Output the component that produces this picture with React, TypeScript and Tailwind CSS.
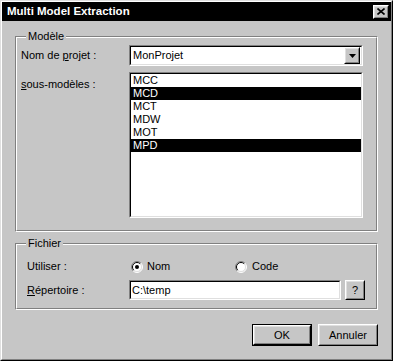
import type { ReactNode } from 'react'

const Raised = ({ className, children }: { className: string; children?: ReactNode }) => (
  <div className={`border border-t-white border-l-white border-r-black border-b-black ${className}`}>
    <div className="flex h-full w-full items-center justify-center border border-t-[#dfdfdf] border-l-[#dfdfdf] border-r-[#808080] border-b-[#808080]">
      {children}
    </div>
  </div>
)

const Sunken = ({ className, children }: { className: string; children?: ReactNode }) => (
  <div className={`border border-t-[#808080] border-l-[#808080] border-r-white border-b-white ${className}`}>
    <div className="h-full w-full border border-t-black border-l-black border-r-[#dfdfdf] border-b-[#dfdfdf] bg-white">
      {children}
    </div>
  </div>
)

const Group = ({ title, className, children }: { title: string; className: string; children: ReactNode }) => (
  <div className={`relative border border-t-[#808080] border-l-[#808080] border-r-white border-b-white ${className}`}>
    <div className="h-full border border-t-white border-l-white border-r-[#808080] border-b-[#808080]">
      {children}
    </div>
    <span className="absolute -top-[7px] left-[10px] bg-[#c6c6c6] px-[2px] leading-[13px]">{title}</span>
  </div>
)

const Radio = ({ checked }: { checked?: boolean }) => (
  <svg width="12" height="12" viewBox="0 0 12 12">
    <circle cx="6" cy="6" r="5" fill="#fff" />
    <path d="M2.1 9.9 A5.5 5.5 0 0 1 9.9 2.1" fill="none" stroke="#808080" />
    <path d="M9.9 2.1 A5.5 5.5 0 0 1 2.1 9.9" fill="none" stroke="#fff" />
    <path d="M2.8 9.2 A4.5 4.5 0 0 1 9.2 2.8" fill="none" stroke="#000" />
    <path d="M9.2 2.8 A4.5 4.5 0 0 1 2.8 9.2" fill="none" stroke="#dfdfdf" />
    {checked && <circle cx="6" cy="6" r="2" fill="#000" />}
  </svg>
)

const items = [
  { name: 'MCC', sel: false },
  { name: 'MCD', sel: true },
  { name: 'MCT', sel: false },
  { name: 'MDW', sel: false },
  { name: 'MOT', sel: false },
  { name: 'MPD', sel: true },
]

export default function App() {
  return (
    <div className="h-[361px] w-[393px] border border-t-[#dfdfdf] border-l-[#dfdfdf] border-r-black border-b-black bg-[#c6c6c6] font-[Liberation_Sans,Arial,sans-serif] text-[11px] text-black">
      <div className="h-full border border-t-white border-l-white border-r-[#808080] border-b-[#808080]">
        {/* title bar */}
        <div className="flex h-[19px] items-center justify-between bg-black pl-[5px] pr-[2px]">
          <span className="text-[11.5px] font-bold text-white">Multi Model Extraction</span>
          <Raised className="h-[14px] w-[16px] bg-[#c6c6c6]">
            <svg width="8" height="7" viewBox="0 0 8 7">
              <path d="M0.5 0.5 L7.5 6.5 M7.5 0.5 L0.5 6.5" stroke="#000" strokeWidth="1.6" />
            </svg>
          </Raised>
        </div>

        <div className="px-[13px]">
          <Group title="Modèle" className="mt-[15px] h-[196px]">
            <div className="flex flex-col pl-[4px] pt-[7px]">
              <div className="flex items-center">
                <span className="w-[108px]">
                  Nom de <u>p</u>rojet :
                </span>
                <Sunken className="h-[21px] w-[234px]">
                  <div className="flex h-full items-center justify-between pr-[1px]">
                    <span className="pl-[2px]">MonProjet</span>
                    <Raised className="h-[17px] w-[16px] bg-[#c6c6c6]">
                      <svg width="7" height="4" viewBox="0 0 7 4">
                        <path d="M0 0h7L3.5 4z" fill="#000" />
                      </svg>
                    </Raised>
                  </div>
                </Sunken>
              </div>
              <div className="mt-[6px] flex items-start">
                <span className="w-[108px] pt-[4px]">
                  <u>s</u>ous-modèles :
                </span>
                <Sunken className="h-[146px] w-[234px]">
                  <ul className="flex flex-col">
                    {items.map((it) => (
                      <li
                        key={it.name}
                        className={
                          it.sel
                            ? 'flex h-[13px] items-center bg-black pl-[2px] leading-[13px] text-white'
                            : 'flex h-[13px] items-center pl-[2px] leading-[13px]'
                        }
                      >
                        {it.name}
                      </li>
                    ))}
                  </ul>
                </Sunken>
              </div>
            </div>
          </Group>

          <Group title="Fichier" className="mt-[11px] h-[67px]">
            <div className="flex flex-col pl-[10px] pt-[15px]">
              <div className="flex h-[13px] items-center">
                <span className="w-[102px]">Utiliser :</span>
                <div className="flex w-[106px] items-center gap-[4px] pl-[2px]">
                  <Radio checked />
                  <span>Nom</span>
                </div>
                <div className="flex items-center gap-[5px]">
                  <Radio />
                  <span>Code</span>
                </div>
              </div>
              <div className="mt-[7px] flex items-center">
                <span className="w-[102px]">
                  <u>R</u>épertoire :
                </span>
                <Sunken className="h-[20px] w-[212px]">
                  <div className="flex h-full items-center pl-[1px]">C:\temp</div>
                </Sunken>
                <Raised className="ml-[4px] h-[20px] w-[20px]">?</Raised>
              </div>
            </div>
          </Group>

          <div className="mt-[14px] flex justify-end gap-[6px]">
            <div className="h-[22px] w-[60px] border border-black">
              <Raised className="h-full w-full">OK</Raised>
            </div>
            <Raised className="h-[22px] w-[60px]">Annuler</Raised>
          </div>
        </div>
      </div>
    </div>
  )
}
